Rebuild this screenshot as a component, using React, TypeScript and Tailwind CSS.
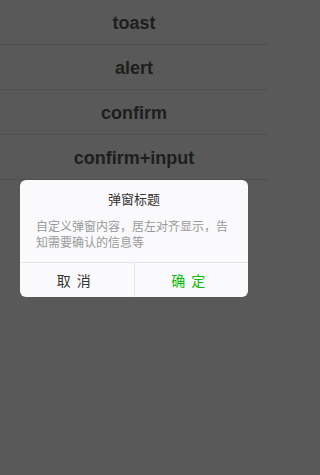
import React from "react";

const rows = ["toast", "alert", "confirm", "confirm+input"];

export default function App() {
    return (
        <div className="min-h-[475px] w-full bg-[#595959]">
            <div className="relative min-h-[475px] w-[268px] font-['Liberation_Sans',Arial,sans-serif]">
                <ul>
                    {rows.map((label) => (
                        <li
                            key={label}
                            className="flex h-[45px] items-center justify-center border-b border-[#4f4f4f] pt-[3px] text-[18px] font-bold text-[#1e1e1e]"
                        >
                            {label}
                        </li>
                    ))}
                </ul>

                {/* dialog over the mask */}
                <div className="absolute left-[20px] top-[180px] w-[228px] overflow-hidden rounded-[6px] bg-[#fafafc] font-['Noto_Sans_CJK_SC',sans-serif]">
                    <div className="pt-[9px] text-center text-[13px] leading-[20px] text-[#333]">
                        弹窗标题
                    </div>
                    <div className="px-[16px] pb-[12px] pt-[9px] text-[12px] leading-[16px] text-[#999]">
                        自定义弹窗内容，居左对齐显示，告知需要确认的信息等
                    </div>
                    <div className="flex h-[35px] border-t border-[#e5e5e5]">
                        <button className="flex flex-1 items-center justify-center text-[14px] tracking-[6px] text-[#333]">
                            取消
                        </button>
                        <button className="flex flex-1 items-center justify-center border-l border-[#e5e5e5] text-[14px] tracking-[6px] text-[#09bb07]">
                            确定
                        </button>
                    </div>
                </div>
            </div>
        </div>
    );
}
